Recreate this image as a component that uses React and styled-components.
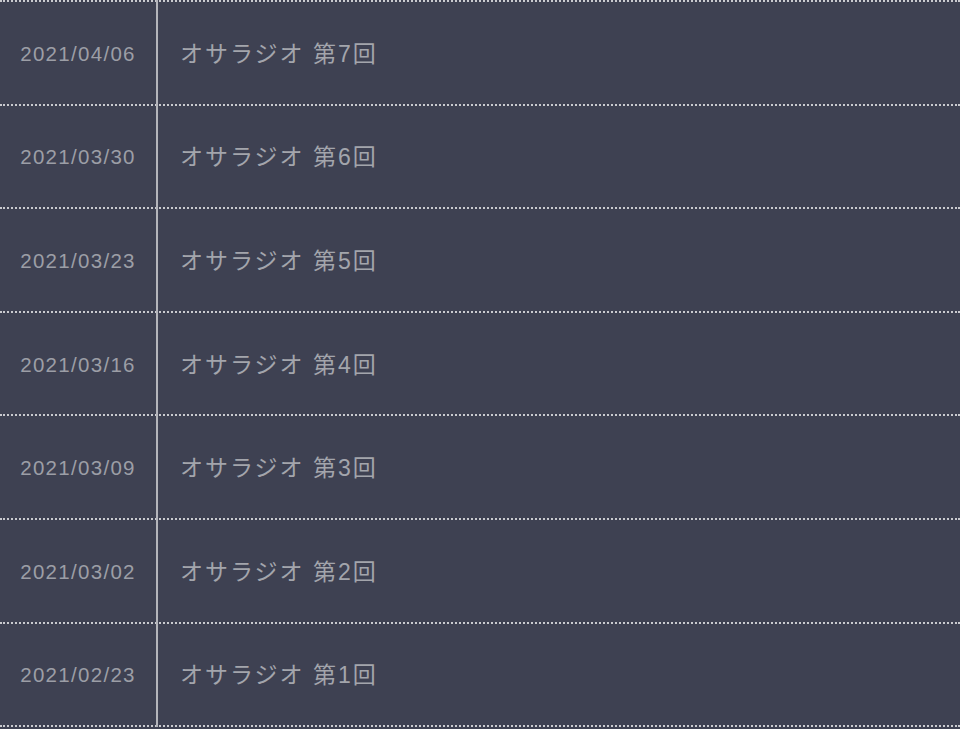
import React from "react";
import styled, { createGlobalStyle } from "styled-components";

const GlobalStyle = createGlobalStyle`
  html, body {
    margin: 0;
    padding: 0;
    background: #3e4152;
  }
  body {
    font-family: "Liberation Sans", "Noto Sans CJK JP", sans-serif;
  }
`;

const Lista = styled.ul`
  list-style: none;
  margin: 0;
  padding: 0;
  width: 960px;
  background: #3e4152;
  border-bottom: 2px dotted #c9cacf;
`;

const Item = styled.li`
  display: flex;
  height: 101.6px;
  border-top: 2px dotted #c9cacf;
`;

const Data = styled.div`
  width: 158px;
  flex-shrink: 0;
  display: flex;
  align-items: center;
  justify-content: center;
  padding-top: 2px;
  box-sizing: border-box;
  border-right: 2px solid #b4b5bb;
  margin-top: -2px;
  margin-bottom: -2px;
  color: #9c9ea6;
  font-family: "Liberation Sans", Arial, sans-serif;
  font-size: 20.5px;
  letter-spacing: 1.3px;
`;

const Titulo = styled.div`
  display: flex;
  align-items: center;
  padding-left: 22px;
  padding-bottom: 2px;
  color: #a3a5ac;
  font-family: "Liberation Sans", "Noto Sans CJK JP", sans-serif;
  font-size: 23px;
  letter-spacing: 2px;
`;

const episodios = [
  { data: "2021/04/06", numero: 7 },
  { data: "2021/03/30", numero: 6 },
  { data: "2021/03/23", numero: 5 },
  { data: "2021/03/16", numero: 4 },
  { data: "2021/03/09", numero: 3 },
  { data: "2021/03/02", numero: 2 },
  { data: "2021/02/23", numero: 1 },
];

function App() {
  return (
    <>
      <GlobalStyle />
      <Lista>
        {episodios.map((ep) => (
          <Item key={ep.numero}>
            <Data>{ep.data}</Data>
            <Titulo>オサラジオ 第{ep.numero}回</Titulo>
          </Item>
        ))}
      </Lista>
    </>
  );
}

export default App;
